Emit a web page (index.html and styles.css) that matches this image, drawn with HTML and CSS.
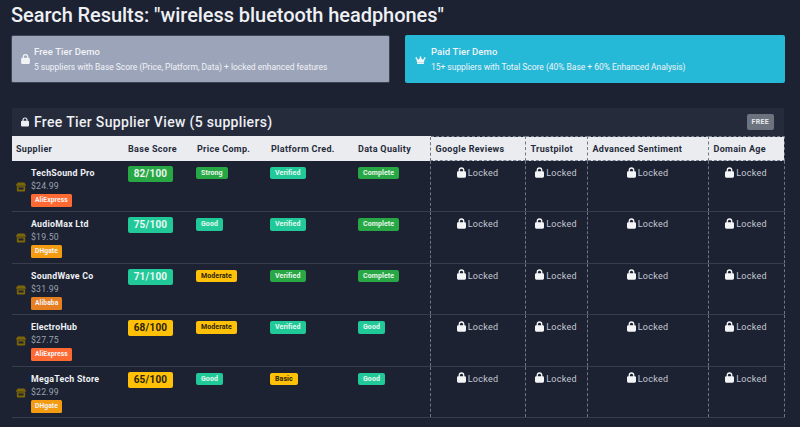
FILE: index.html
```html
<!DOCTYPE html>
<html lang="en">
<head>
<meta charset="utf-8">
<title>Search Results</title>
<link rel="stylesheet" href="styles.css">
</head>
<body>
<svg class="defs" width="0" height="0" aria-hidden="true">
  <symbol id="lock" viewBox="0 0 448 512"><path d="M144 144v48h160v-48a80 80 0 0 0-160 0zM80 192v-48a144 144 0 0 1 288 0v48h16a64 64 0 0 1 64 64v192a64 64 0 0 1-64 64H64a64 64 0 0 1-64-64V256a64 64 0 0 1 64-64h16z"/></symbol>
  <symbol id="store" viewBox="0 0 24 24"><path d="M4 1h16l4 6v2H0V7zM2 10h20v11a2 2 0 0 1-2 2H4a2 2 0 0 1-2-2zm4 3v5h12v-5z"/></symbol>
</svg>
<main class="page">
  <h1 class="title">Search Results: "wireless bluetooth headphones"</h1>
  <section class="demos">
    <div class="demo demo-free">
      <svg class="demo-icon"><use href="#lock"/></svg>
      <div class="demo-body"><div class="demo-name">Free Tier Demo</div><div class="demo-text">5 suppliers with Base Score (Price, Platform, Data) + locked enhanced features</div></div>
    </div>
    <div class="demo demo-paid">
      <svg class="demo-icon crown" viewBox="0 0 24 20"><path d="M12 2.500a2 2 0 0 1 1.300 3.500l3 4.600 3.400-2.600a2 2 0 1 1 1.700.9L19.500 17h-15L2.600 8.900a2 2 0 1 1 1.700-.9l3.400 2.600 3-4.600A2 2 0 0 1 12 2.500zM4.500 18h15v2h-15z"/></svg>
      <div class="demo-body"><div class="demo-name">Paid Tier Demo</div><div class="demo-text">15+ suppliers with Total Score (40% Base + 60% Enhanced Analysis)</div></div>
    </div>
  </section>
  <section class="panel">
    <header class="panel-head">
      <h2 class="panel-title"><svg class="panel-lock"><use href="#lock"/></svg>Free Tier Supplier View (5 suppliers)</h2>
      <span class="free-tag">FREE</span>
    </header>
    <table class="results">
      <colgroup><col class="c-sup"><col class="c-base"><col class="c-price"><col class="c-plat"><col class="c-data"><col class="c-goog"><col class="c-trust"><col class="c-adv"><col class="c-dom"></colgroup>
      <thead>
        <tr><th>Supplier</th><th>Base Score</th><th class="nudge">Price Comp.</th><th class="nudge">Platform Cred.</th><th>Data Quality</th><th class="pro">Google Reviews</th><th class="pro">Trustpilot</th><th class="pro">Advanced Sentiment</th><th class="pro">Domain Age</th></tr>
      </thead>
      <tbody>
        <tr>
          <td><div class="sup"><svg class="store"><use href="#store"/></svg><div><div class="sup-name">TechSound Pro</div><div class="sup-price">$24.99</div><span class="plat aliexpress">AliExpress</span></div></div></td>
          <td><span class="score green">82/100</span></td><td><span class="tag green">Strong</span></td><td><span class="tag teal">Verified</span></td><td><span class="tag green">Complete</span></td>
          <td class="pro locked"><svg class="lock"><use href="#lock"/></svg>Locked</td><td class="pro locked"><svg class="lock"><use href="#lock"/></svg>Locked</td><td class="pro locked"><svg class="lock"><use href="#lock"/></svg>Locked</td><td class="pro locked"><svg class="lock"><use href="#lock"/></svg>Locked</td>
        </tr>
        <tr>
          <td><div class="sup"><svg class="store"><use href="#store"/></svg><div><div class="sup-name">AudioMax Ltd</div><div class="sup-price">$19.50</div><span class="plat dhgate">DHgate</span></div></div></td>
          <td><span class="score teal">75/100</span></td><td><span class="tag teal">Good</span></td><td><span class="tag teal">Verified</span></td><td><span class="tag green">Complete</span></td>
          <td class="pro locked"><svg class="lock"><use href="#lock"/></svg>Locked</td><td class="pro locked"><svg class="lock"><use href="#lock"/></svg>Locked</td><td class="pro locked"><svg class="lock"><use href="#lock"/></svg>Locked</td><td class="pro locked"><svg class="lock"><use href="#lock"/></svg>Locked</td>
        </tr>
        <tr>
          <td><div class="sup"><svg class="store"><use href="#store"/></svg><div><div class="sup-name">SoundWave Co</div><div class="sup-price">$31.99</div><span class="plat alibaba">Alibaba</span></div></div></td>
          <td><span class="score teal">71/100</span></td><td><span class="tag yellow">Moderate</span></td><td><span class="tag green">Verified</span></td><td><span class="tag green">Complete</span></td>
          <td class="pro locked"><svg class="lock"><use href="#lock"/></svg>Locked</td><td class="pro locked"><svg class="lock"><use href="#lock"/></svg>Locked</td><td class="pro locked"><svg class="lock"><use href="#lock"/></svg>Locked</td><td class="pro locked"><svg class="lock"><use href="#lock"/></svg>Locked</td>
        </tr>
        <tr>
          <td><div class="sup"><svg class="store"><use href="#store"/></svg><div><div class="sup-name">ElectroHub</div><div class="sup-price">$27.75</div><span class="plat aliexpress">AliExpress</span></div></div></td>
          <td><span class="score yellow">68/100</span></td><td><span class="tag yellow">Moderate</span></td><td><span class="tag teal">Verified</span></td><td><span class="tag teal">Good</span></td>
          <td class="pro locked"><svg class="lock"><use href="#lock"/></svg>Locked</td><td class="pro locked"><svg class="lock"><use href="#lock"/></svg>Locked</td><td class="pro locked"><svg class="lock"><use href="#lock"/></svg>Locked</td><td class="pro locked"><svg class="lock"><use href="#lock"/></svg>Locked</td>
        </tr>
        <tr>
          <td><div class="sup"><svg class="store"><use href="#store"/></svg><div><div class="sup-name">MegaTech Store</div><div class="sup-price">$22.99</div><span class="plat dhgate">DHgate</span></div></div></td>
          <td><span class="score yellow">65/100</span></td><td><span class="tag teal">Good</span></td><td><span class="tag yellow">Basic</span></td><td><span class="tag teal">Good</span></td>
          <td class="pro locked"><svg class="lock"><use href="#lock"/></svg>Locked</td><td class="pro locked"><svg class="lock"><use href="#lock"/></svg>Locked</td><td class="pro locked"><svg class="lock"><use href="#lock"/></svg>Locked</td><td class="pro locked"><svg class="lock"><use href="#lock"/></svg>Locked</td>
        </tr>
      </tbody>
    </table>
  </section>
</main>
</body>
</html>
```

FILE: styles.css
```css
* { box-sizing: border-box; }
html, body { margin: 0; height: 100%; overflow: hidden; }
body { background: #1c2232; color: #f1f3f7; font-family: Roboto, "Noto Sans", sans-serif; }
.defs { position: absolute; }
svg { fill: currentColor; }
.page { padding: 0 15px 0 11px; }
.title { margin: 0; padding-top: 1px; font-size: 20px; line-height: 29px; font-weight: 500; letter-spacing: -0.06px; color: #eef0f4; }
.demos { display: grid; grid-template-columns: 379px 380px; gap: 15px; margin-top: 5px; }
.demo { height: 48px; display: flex; align-items: center; gap: 4px; padding: 0 9px; border-radius: 2px; color: #f1f3f7; font-size: 9px; }
.demo-free { background: #9ca4b9; border: 1px solid #3c4356; }
.demo-paid { background: #25b9d7; padding-left: 10px; }
.demo-icon { width: 9px; height: 10px; flex: none; }
.crown { width: 11px; height: 9px; margin-right: 1px; }
.demo-body { padding-top: 1px; }
.demo-name { font-size: 9.500px; line-height: 12px; font-weight: 500; letter-spacing: 0.1px; margin-bottom: 3px; }
.demo-text { font-size: 8.500px; line-height: 12px; letter-spacing: -0.03px; }
.panel { margin-top: 25px; margin-left: 1px; width: 772px; }
.panel-head { height: 28px; background: #252b3b; display: flex; align-items: center; justify-content: space-between; padding: 0 10px 0 9px; }
.panel-title { margin: 0; display: flex; align-items: center; gap: 5px; font-size: 14px; font-weight: 500; letter-spacing: 0.33px; color: #eef0f4; }
.panel-lock { width: 8px; height: 10px; }
.free-tag { background: #6c737f; color: #e8eaee; font-size: 7px; font-weight: 700; letter-spacing: 0.3px; line-height: 16px; padding: 0 5px; border-radius: 2px; }
.results { width: 772px; table-layout: fixed; border-collapse: collapse; }
.c-sup { width: 112px; } .c-base { width: 68px; } .c-price { width: 74px; } .c-plat { width: 88px; } .c-data { width: 76px; }
.c-goog { width: 95px; } .c-trust { width: 62px; } .c-adv { width: 121px; } .c-dom { width: 76px; }
.results th { height: 24px; background: #ebecf0; color: #252b3b; font-size: 9px; font-weight: 700; text-align: left; padding: 0 4px; letter-spacing: 0.32px; white-space: nowrap; border-top: 1px solid #ebecf0; }
.results th.nudge { padding-left: 5px; }
.results td { height: 51.400px; padding: 5px 4px 0; vertical-align: top; border-bottom: 1px solid #373d4d; }
.results .pro { border-left: 1px dashed #6f7584; border-right: 1px dashed #6f7584; }
.results th.pro { border-top: 1px dashed #7b8190; border-bottom: 1px dashed #7b8190; padding-left: 5px; }
.results td.locked { text-align: center; font-size: 9px; line-height: 16px; color: #c5c9d2; letter-spacing: 0.25px; padding-top: 4px; }
.lock { width: 9px; height: 11px; margin-right: 2px; vertical-align: -1.500px; color: #f4f5f7; }
.sup { display: flex; align-items: center; gap: 5px; margin-top: 1px; }
.store { width: 10px; height: 10px; flex: none; color: #7c6607; }
.sup-name { font-size: 8.800px; line-height: 13px; font-weight: 700; letter-spacing: 0.25px; color: #eef0f4; }
.sup-price { font-size: 8.700px; line-height: 13px; color: #9ba1ae; letter-spacing: 0.2px; }
.plat { display: block; width: fit-content; margin-top: 1px; font-size: 6.700px; font-weight: 700; line-height: 13px; padding: 0 4px; border-radius: 1.500px; color: #f4f5f7; letter-spacing: 0.1px; }
.aliexpress { background: #ff6a33; }
.dhgate { background: #f39c12; }
.alibaba { background: #e67e22; }
.score { display: block; width: 45px; text-align: center; font-size: 10px; line-height: 16px; font-weight: 700; border-radius: 2px; letter-spacing: 0.2px; }
.tag { display: block; width: fit-content; margin-top: 1px; font-size: 7px; line-height: 12.500px; font-weight: 700; padding: 0 5px; border-radius: 2px; letter-spacing: 0.1px; }
.green { background: #28a745; color: #e9f5ec; }
.teal { background: #20c997; color: #e9f8f3; }
.yellow { background: #ffc107; color: #2a2306; }
```
